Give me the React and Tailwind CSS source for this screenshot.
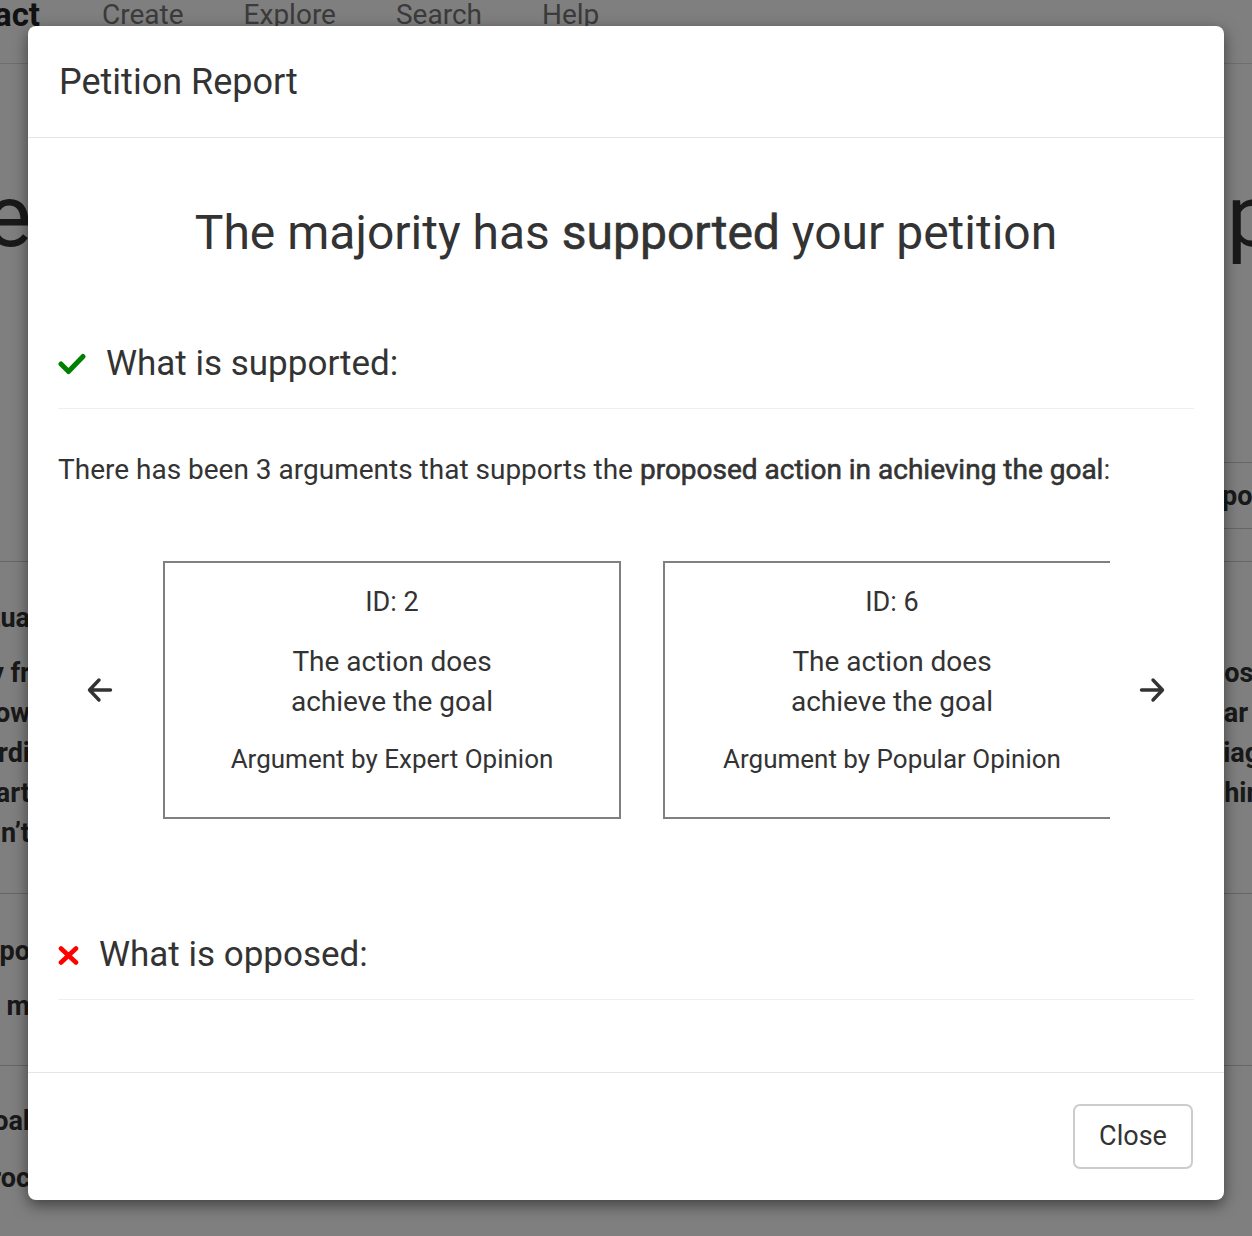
import React from "react";

const ARGUMENTS = [
  { id: 2, text: "The action does achieve the goal", scheme: "Argument by Expert Opinion" },
  { id: 6, text: "The action does achieve the goal", scheme: "Argument by Popular Opinion" },
  { id: 9, text: "The action does achieve the goal", scheme: "Argument by Analogy" },
];

function ArrowIcon({ dir = "left" }) {
  return (
    <svg width="26" height="26" viewBox="0 0 26 26" fill="none" stroke="#333" strokeWidth="3.4" strokeLinecap="round" strokeLinejoin="round">
      {dir === "left" ? (
        <path d="M12 3 L2.5 13 L12 23 M3 13 H23.5" />
      ) : (
        <path d="M14 3 L23.5 13 L14 23 M23 13 H2.5" />
      )}
    </svg>
  );
}

function CheckIcon() {
  return (
    <svg width="28" height="22" viewBox="0 0 28 22" fill="none" stroke="#008000" strokeWidth="5" strokeLinecap="round" strokeLinejoin="round">
      <polyline points="3,11 10.5,18.5 25,3.5" />
    </svg>
  );
}

function CrossIcon() {
  return (
    <svg width="21" height="19" viewBox="0 0 21 19" fill="none" stroke="#ff0000" strokeWidth="4.6" strokeLinecap="round">
      <path d="M3 2.5 L18 16.5 M18 2.5 L3 16.5" />
    </svg>
  );
}

// medium weight: the installed Roboto has no 500, so thicken the regular cut a bit
const medium = "font-normal [-webkit-text-stroke:0.6px_#333]";

function SectionTitle({ icon, children }) {
  return (
    <div className="flex items-center gap-5 h-[44px] pb-[22px] border-b border-[#eee] box-content">
      {icon}
      <h4 className="text-[35px] leading-[44px] text-[#333]">{children}</h4>
    </div>
  );
}

function ArgumentCard({ arg }) {
  return (
    <div className="shrink-0 w-[458px] h-[258px] mx-[21px] border-2 border-[#808080] flex flex-col items-center pt-[19px] text-[#333] text-center">
      <p className="text-[27px] leading-[40px]">ID: {arg.id}</p>
      <p className="mt-5 max-w-[250px] text-[28px] leading-[40px]">{arg.text}</p>
      <p className="mt-[19px] text-[26px] leading-[36px]">{arg.scheme}</p>
    </div>
  );
}

function BackgroundPage() {
  return (
    <div className="absolute inset-0 bg-white text-[#333]">
      {/* navbar */}
      <nav className="h-[64px] border-b border-[#ddd] flex items-start">
        <span className="-ml-[6px] text-[33px] leading-[30px] font-bold text-[#222]">act</span>
        <ul className="flex gap-[60px] ml-[62px] text-[28px] leading-[30px] text-[#777]">
          <li>Create</li>
          <li>Explore</li>
          <li>Search</li>
          <li>Help</li>
        </ul>
        <span className="ml-auto -mr-[30px] text-[28px] leading-[30px] text-[#777]">ac</span>
      </nav>

      {/* page heading */}
      <h1 className="mt-[102px] flex justify-between whitespace-nowrap text-[88px] leading-[100px]">
        <span className="-ml-[116px]">The</span>
        <span className="-mr-[270px]">petition</span>
      </h1>

      <div className="mt-[196px] text-[27px] leading-[40px] font-bold">
        <div className="flex justify-end">
          <div className="w-[28px] h-[67px] border-y border-[#ccc] flex items-center whitespace-nowrap">
            <p className="-ml-[44px]">Proposal</p>
          </div>
        </div>
        <div className="h-[32px]" />

        <div className="border-t border-[#ccc] flex justify-between h-[332px]">
          <div className="-ml-[170px] w-[200px] text-right whitespace-nowrap pt-[36px]">
            <p>Actua</p>
            <p className="mt-[15px]">Many fr</p>
            <p>How</p>
            <p>Accordi</p>
            <p>Smart</p>
            <p>Couldn’t</p>
          </div>
          <div className="w-[28px] whitespace-nowrap pt-[91px]">
            <p className="-ml-[15px]">post</p>
            <p className="-ml-[36px]">clear</p>
            <p className="-ml-[16px]">diag</p>
            <p className="-ml-[9px]">thin</p>
          </div>
        </div>

        <div className="border-t border-[#ccc] h-[172px] pt-[37px]">
          <div className="-ml-[170px] w-[200px] text-right whitespace-nowrap">
            <p>Oppo</p>
            <p className="mt-[15px]">Some m</p>
          </div>
        </div>

        <div className="border-t border-[#ccc] pt-[35px]">
          <div className="-ml-[170px] w-[200px] text-right whitespace-nowrap">
            <p>Goal</p>
            <p className="mt-[17px]">Proc</p>
          </div>
        </div>
      </div>
    </div>
  );
}

export default function App() {
  return (
    <div className="relative w-full h-[1236px] overflow-hidden font-['Roboto','Liberation_Sans',sans-serif]">
      <BackgroundPage />

      {/* backdrop */}
      <div className="absolute inset-0 bg-black/50" />

      {/* modal */}
      <div className="absolute inset-0 flex justify-center pt-[26px]">
        <div className="w-[1196px] h-[1174px] bg-white rounded-[8px] shadow-[0_5px_15px_rgba(0,0,0,0.5)] flex flex-col">
          <header className="h-[112px] shrink-0 border-b border-[#e5e5e5] flex items-center px-[31px]">
            <h3 className="text-[36px] text-[#333]">Petition Report</h3>
          </header>

          <div className="flex-1 px-[30px] pt-[66px] text-[#333]">
            <h1 className="text-center text-[48px] leading-[58px]">
              The majority has <span className={medium}>supported</span> your petition
            </h1>

            <div className="mt-[80px]">
              <SectionTitle icon={<CheckIcon />}>What is supported:</SectionTitle>
            </div>

            <p className="mt-[41px] text-[28px] leading-[40px]">
              There has been 3 arguments that supports the{" "}
              <span className={medium}>proposed action in achieving the goal</span>:
            </p>

            <div className="mt-[71px] flex items-center">
              <button type="button" aria-label="Previous" className="w-[84px] flex justify-center">
                <ArrowIcon dir="left" />
              </button>
              <div className="w-[968px] overflow-hidden flex">
                {ARGUMENTS.map((arg) => (
                  <ArgumentCard key={arg.id} arg={arg} />
                ))}
              </div>
              <button type="button" aria-label="Next" className="w-[84px] flex justify-center">
                <ArrowIcon dir="right" />
              </button>
            </div>

            <div className="mt-[114px]">
              <SectionTitle icon={<CrossIcon />}>What is opposed:</SectionTitle>
            </div>
          </div>

          <footer className="shrink-0 border-t border-[#e5e5e5] flex justify-end px-[31px] py-[31px]">
            <button
              type="button"
              className="w-[120px] h-[65px] rounded-[7px] border-2 border-[#ccc] text-[27px] text-[#333] bg-white"
            >
              Close
            </button>
          </footer>
        </div>
      </div>
    </div>
  );
}
